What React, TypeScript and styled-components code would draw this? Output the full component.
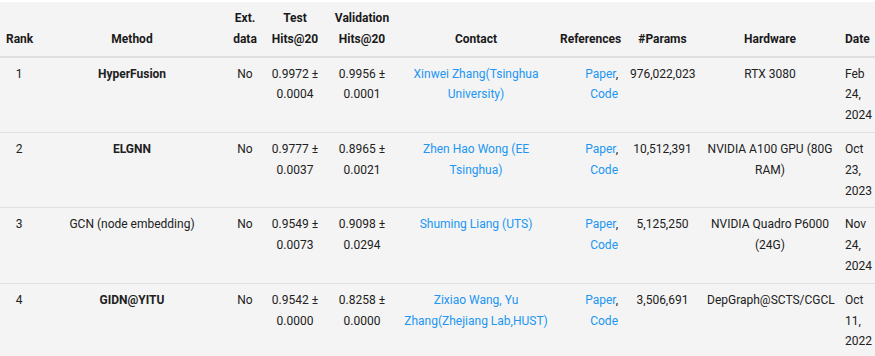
import React from "react"
import styled, { createGlobalStyle } from "styled-components"

type Align = "left" | "center" | "right"

type Column = Readonly<{
  key: string
  title: React.ReactNode
  width: number
  align: Align
}>

type Entry = Readonly<{
  rank: number
  method: string
  bold: boolean
  extData: string
  test: string
  validation: string
  contact: string
  params: string
  hardware: string
  date: string
}>

const GlobalStyle = createGlobalStyle`
  html, body {
    margin: 0;
    padding: 0;
    background: #ffffff;
    overflow: hidden;
  }
`

const Wrapper = styled.div`
  padding-top: 2px;
  width: 890px;
  background: #ffffff;
`

const Table = styled.table`
  table-layout: fixed;
  border-collapse: collapse;
  width: 882px;
  background: #f4f4f4;
  font-family: Roboto, "Liberation Sans", sans-serif;
  font-size: 12px;
  line-height: 20.8px;
  color: #212121;
`

const HeadCell = styled.th<{ $align: Align }>`
  padding: 6px 6px;
  text-align: ${({ $align }) => $align};
  vertical-align: bottom;
  font-weight: 700;
  color: #1a1a1a;
  border-bottom: 2px solid #dedede;
`

const Row = styled.tr`
  & + & td {
    border-top: 1px solid #e0e0e0;
  }
`

const Cell = styled.td<{ $align: Align }>`
  padding: 6px 6px;
  text-align: ${({ $align }) => $align};
  vertical-align: top;
`

const MethodName = styled.span<{ $bold: boolean }>`
  font-weight: ${({ $bold }) => ($bold ? 700 : 400)};
`

const Link = styled.a`
  color: #2196f3;
  text-decoration: none;
`

const columns: Column[] = [
  { key: "rank", title: "Rank", width: 38, align: "center" },
  { key: "method", title: "Method", width: 188, align: "center" },
  { key: "ext", title: "Ext. data", width: 38, align: "center" },
  { key: "test", title: "Test Hits@20", width: 62, align: "center" },
  { key: "valid", title: "Validation Hits@20", width: 72, align: "center" },
  { key: "contact", title: "Contact", width: 156, align: "center" },
  { key: "refs", title: "References", width: 70, align: "right" },
  { key: "params", title: "#Params", width: 77, align: "center" },
  { key: "hardware", title: "Hardware", width: 138, align: "center" },
  { key: "date", title: "Date", width: 43, align: "left" },
]

const entries: Entry[] = [
  {
    rank: 1,
    method: "HyperFusion",
    bold: true,
    extData: "No",
    test: "0.9972 ± 0.0004",
    validation: "0.9956 ± 0.0001",
    contact: "Xinwei Zhang(Tsinghua University)",
    params: "976,022,023",
    hardware: "RTX 3080",
    date: "Feb 24, 2024",
  },
  {
    rank: 2,
    method: "ELGNN",
    bold: true,
    extData: "No",
    test: "0.9777 ± 0.0037",
    validation: "0.8965 ± 0.0021",
    contact: "Zhen Hao Wong (EE Tsinghua)",
    params: "10,512,391",
    hardware: "NVIDIA A100 GPU (80G RAM)",
    date: "Oct 23, 2023",
  },
  {
    rank: 3,
    method: "GCN (node embedding)",
    bold: false,
    extData: "No",
    test: "0.9549 ± 0.0073",
    validation: "0.9098 ± 0.0294",
    contact: "Shuming Liang (UTS)",
    params: "5,125,250",
    hardware: "NVIDIA Quadro P6000 (24G)",
    date: "Nov 24, 2024",
  },
  {
    rank: 4,
    method: "GIDN@YITU",
    bold: true,
    extData: "No",
    test: "0.9542 ± 0.0000",
    validation: "0.8258 ± 0.0000",
    contact: "Zixiao Wang, Yu Zhang(Zhejiang Lab,HUST)",
    params: "3,506,691",
    hardware: "DepGraph@SCTS/CGCL",
    date: "Oct 11, 2022",
  },
]

const align = (key: string) => columns.find((c) => c.key === key)?.align ?? "center"

const App = () => (
  <Wrapper>
    <GlobalStyle />
    <Table>
      <colgroup>
        {columns.map((c) => (
          <col key={c.key} style={{ width: c.width }} />
        ))}
      </colgroup>
      <thead>
        <tr>
          {columns.map((c) => (
            <HeadCell key={c.key} $align={c.align}>
              {c.title}
            </HeadCell>
          ))}
        </tr>
      </thead>
      <tbody>
        {entries.map((e) => (
          <Row key={e.rank}>
            <Cell $align={align("rank")}>{e.rank}</Cell>
            <Cell $align={align("method")}>
              <MethodName $bold={e.bold}>{e.method}</MethodName>
            </Cell>
            <Cell $align={align("ext")}>{e.extData}</Cell>
            <Cell $align={align("test")}>{e.test}</Cell>
            <Cell $align={align("valid")}>{e.validation}</Cell>
            <Cell $align={align("contact")}>
              <Link href="#">{e.contact}</Link>
            </Cell>
            <Cell $align={align("refs")}>
              <Link href="#">Paper</Link>, <Link href="#">Code</Link>
            </Cell>
            <Cell $align={align("params")}>{e.params}</Cell>
            <Cell $align={align("hardware")}>{e.hardware}</Cell>
            <Cell $align={align("date")}>{e.date}</Cell>
          </Row>
        ))}
      </tbody>
    </Table>
  </Wrapper>
)

export default App
